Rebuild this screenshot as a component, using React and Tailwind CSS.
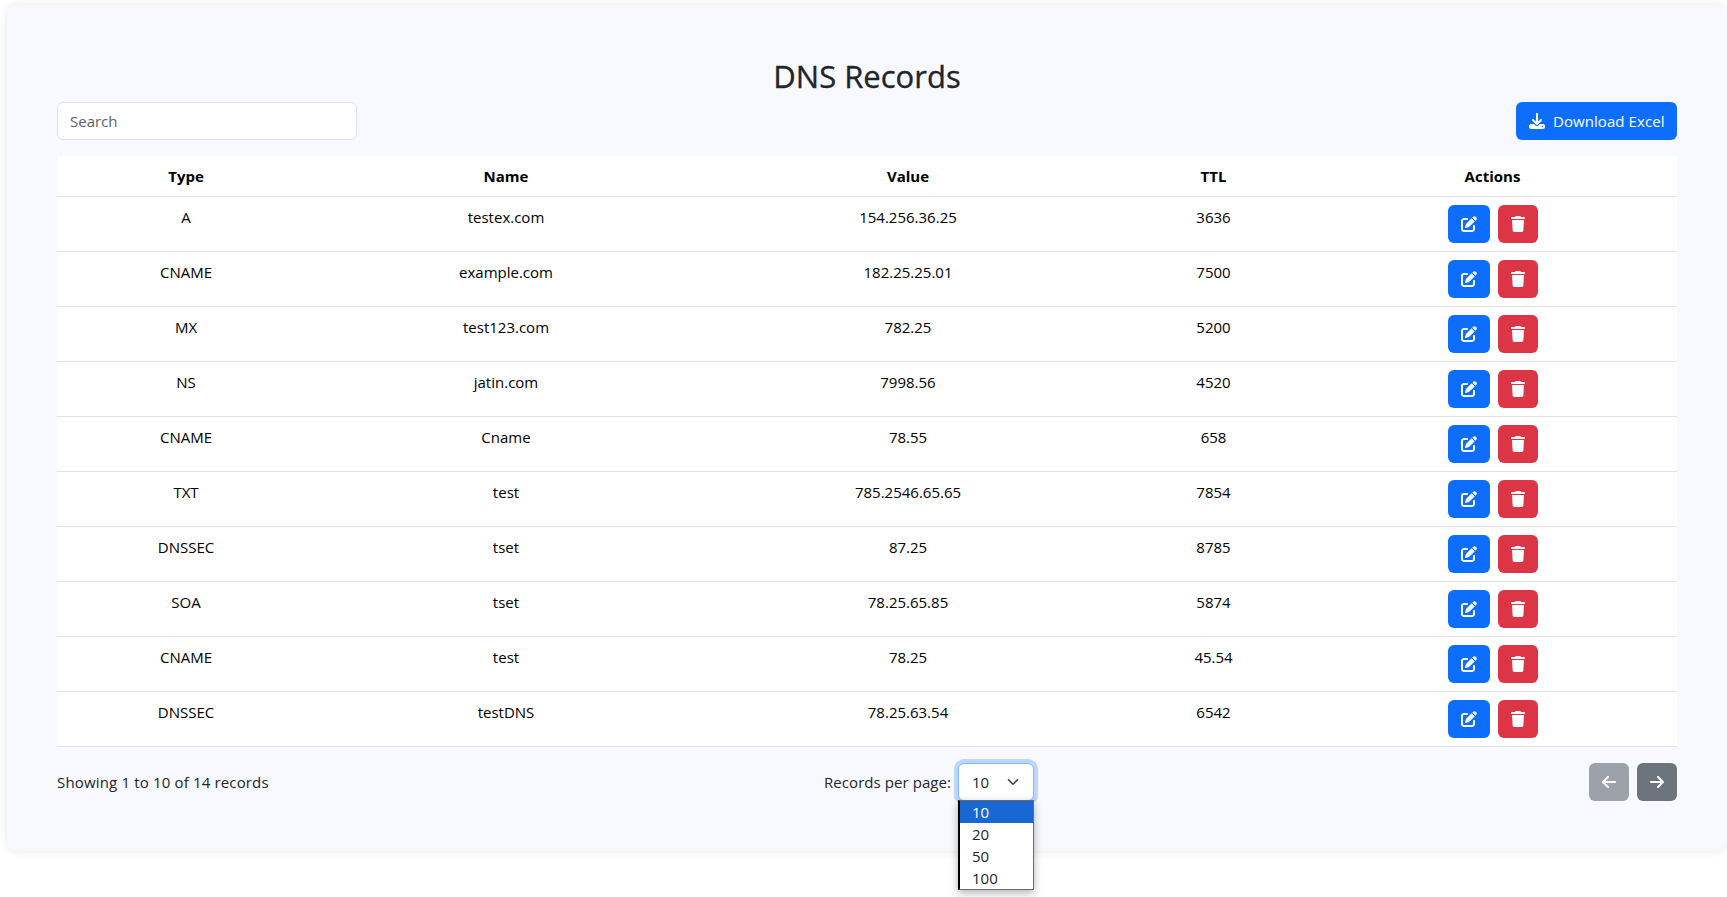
import React from "react";
import { FaDownload, FaPenToSquare, FaTrash, FaArrowLeft, FaArrowRight } from "react-icons/fa6";

const records = [
  ["A", "testex.com", "154.256.36.25", "3636"],
  ["CNAME", "example.com", "182.25.25.01", "7500"],
  ["MX", "test123.com", "782.25", "5200"],
  ["NS", "jatin.com", "7998.56", "4520"],
  ["CNAME", "Cname", "78.55", "658"],
  ["TXT", "test", "785.2546.65.65", "7854"],
  ["DNSSEC", "tset", "87.25", "8785"],
  ["SOA", "tset", "78.25.65.85", "5874"],
  ["CNAME", "test", "78.25", "45.54"],
  ["DNSSEC", "testDNS", "78.25.63.54", "6542"],
];

const columns = "grid grid-cols-[258px_382px_422px_189px_369px] border-b border-[#dee2e6] bg-white text-center text-black";

function Row({ record }) {
  return (
    <div className={`${columns} h-[55px] pt-2`}>
      {record.map((cell, i) => (
        <div key={i}>{cell}</div>
      ))}
      <div className="flex justify-center gap-2">
        <button aria-label="Edit" className="flex h-[38px] w-[42px] items-center justify-center rounded-md bg-[#0d6efd] text-white">
          <FaPenToSquare size={16} />
        </button>
        <button aria-label="Delete" className="flex h-[38px] w-10 items-center justify-center rounded-md bg-[#dc3545] text-white">
          <FaTrash className="h-4 w-3.5" />
        </button>
      </div>
    </div>
  );
}

function PageSize() {
  return (
    <div className="relative">
      <div className="flex h-[38px] w-[76px] items-center justify-between rounded-md border border-[#86b7fe] bg-white pr-3 pl-[13px] ring-4 ring-[#0d6efd]/25">
        <span>10</span>
        <svg viewBox="0 0 16 16" className="h-3 w-4" fill="none" stroke="#343a40" strokeWidth="2" strokeLinecap="round" strokeLinejoin="round">
          <path d="m2 5 6 6 6-6" />
        </svg>
      </div>
      <div className="absolute top-[37px] left-0 w-[76px] border border-l-2 border-[#6b6b6b] border-l-black bg-white text-[#212529] shadow-[0_3px_8px_rgba(0,0,0,0.3)]">
        <div className="h-[22px] bg-[#1967d2] pl-3 leading-[22px] text-white">10</div>
        <div className="h-[22px] pl-3 leading-[22px]">20</div>
        <div className="h-[22px] pl-3 leading-[22px]">50</div>
        <div className="h-[22px] pl-3 leading-[22px]">100</div>
      </div>
    </div>
  );
}

export default function App() {
  return (
    <div className="h-[897px] overflow-hidden bg-white pt-[5px] pl-[7px] font-['Open_Sans',sans-serif] text-[15px] leading-6 text-[#212529]">
      <div className="h-[846px] rounded-[10px] bg-[#f8f9ff] p-[50px] shadow-[0_0_10px_rgba(0,0,0,0.1)]">
        <h2 className="h-[47px] pt-0.5 text-center text-[31px] leading-[38px] font-medium [-webkit-text-stroke:0.35px_#212529]">DNS Records</h2>
        <div className="mb-4 flex justify-between">
          <input placeholder="Search" className="h-[38px] w-[300px] rounded-md border border-[#dee2e6] bg-white px-3 placeholder:text-[#5c6166]" />
          <button className="flex h-[38px] w-[161px] items-center rounded-md bg-[#0d6efd] pl-[13px] tracking-[0.07px] whitespace-nowrap text-white">
            <FaDownload size={16} className="mr-2" />
            Download Excel
          </button>
        </div>
        <div className={`${columns} h-[41px] pt-2 font-bold`}>
          <div>Type</div>
          <div>Name</div>
          <div>Value</div>
          <div>TTL</div>
          <div>Actions</div>
        </div>
        {records.map((record, i) => (
          <Row key={i} record={record} />
        ))}
        <div className="mt-4 flex h-[38px] items-center justify-between">
          <div className="w-[767px] tracking-[0.16px]">Showing 1 to 10 of 14 records</div>
          <div className="flex flex-1 items-center gap-2">
            <span className="w-[126px] tracking-[0.07px] whitespace-nowrap">Records per page:</span>
            <PageSize />
          </div>
          <div className="flex gap-2">
            <button aria-label="Previous page" className="flex h-[38px] w-10 items-center justify-center rounded-md bg-[#6c757d] text-white opacity-65">
              <FaArrowLeft className="h-4 w-3.5" />
            </button>
            <button aria-label="Next page" className="flex h-[38px] w-10 items-center justify-center rounded-md bg-[#6c757d] text-white">
              <FaArrowRight className="h-4 w-3.5" />
            </button>
          </div>
        </div>
      </div>
    </div>
  );
}
